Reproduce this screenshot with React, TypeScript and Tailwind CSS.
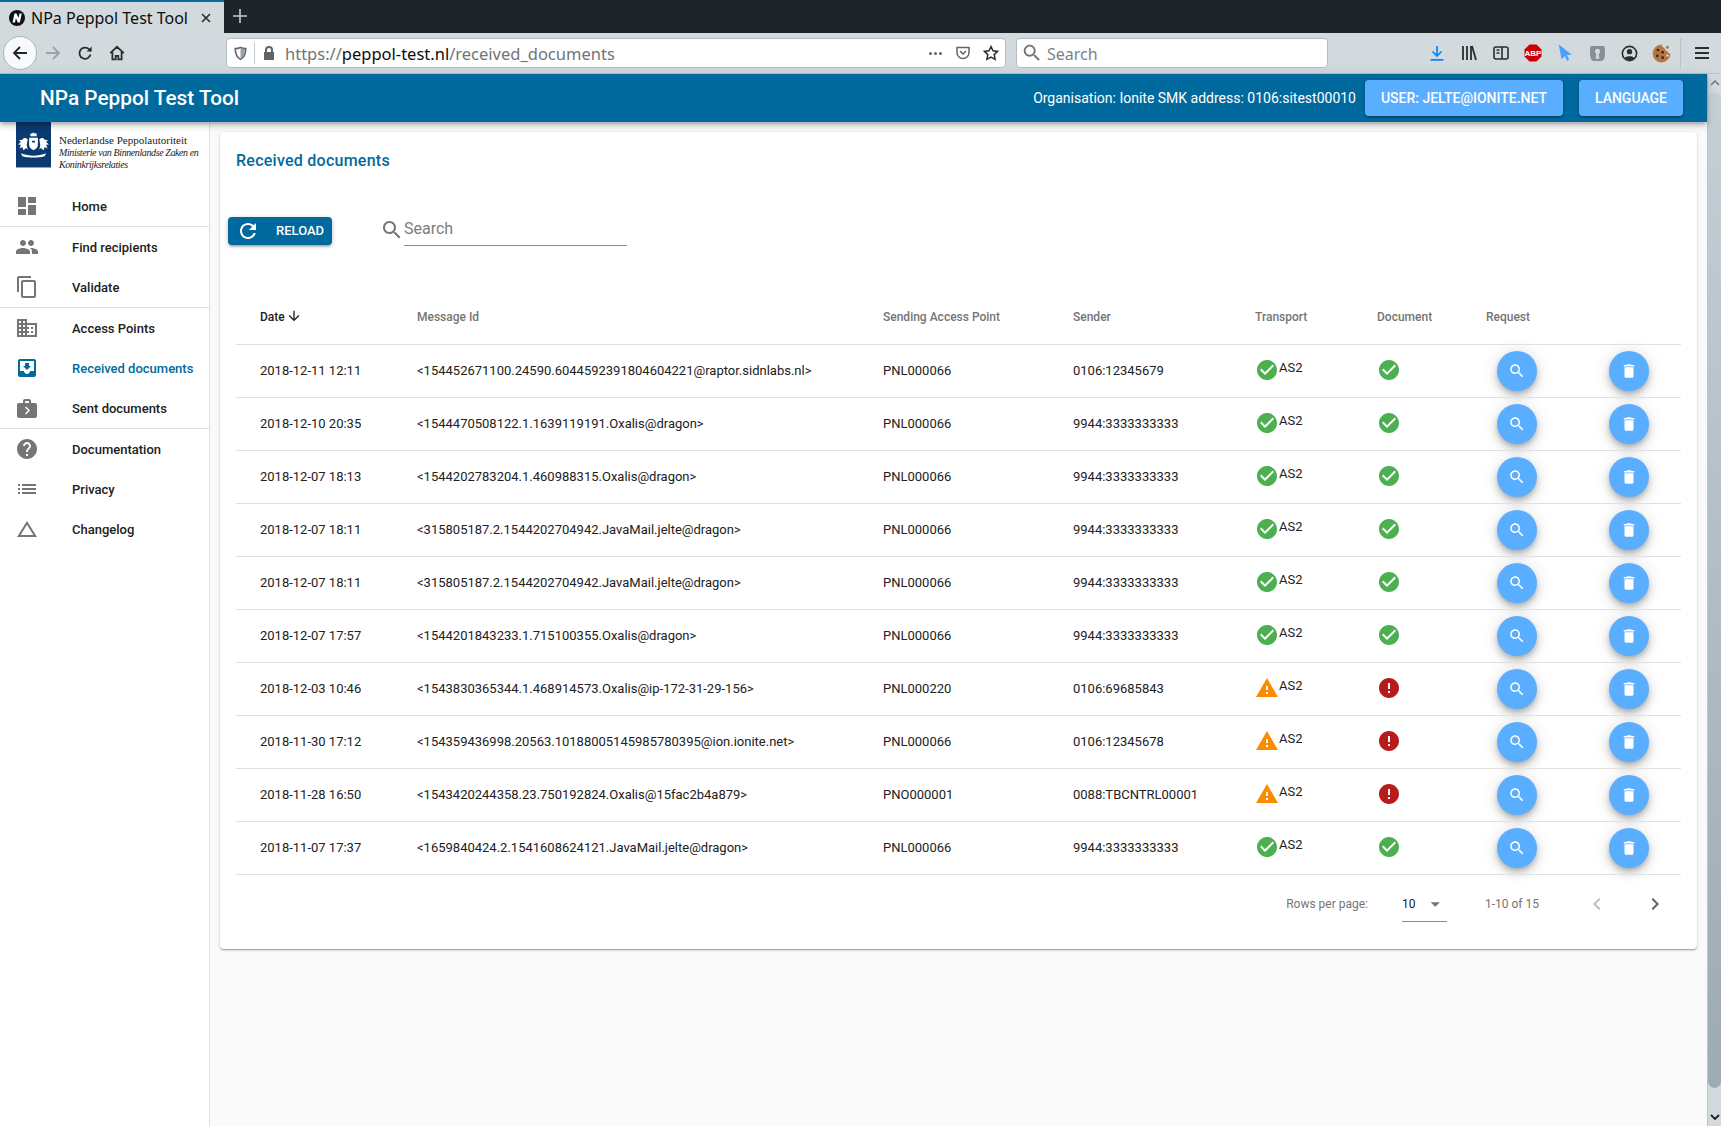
import React from "react";

const paths = {
  dashboard: "M3 13h8V3H3v10zm0 8h8v-6H3v6zm10 0h8V11h-8v10zm0-18v6h8V3h-8z",
  people:
    "M16 11c1.66 0 2.99-1.34 2.99-3S17.66 5 16 5c-1.66 0-3 1.34-3 3s1.34 3 3 3zm-8 0c1.66 0 2.99-1.34 2.99-3S9.66 5 8 5C6.34 5 5 6.34 5 8s1.34 3 3 3zm0 2c-2.33 0-7 1.17-7 3.5V19h14v-2.5c0-2.33-4.67-3.5-7-3.5zm8 0c-.29 0-.62.02-.97.05 1.16.84 1.97 1.97 1.97 3.45V19h6v-2.5c0-2.33-4.67-3.5-7-3.5z",
  copy: "M16 1H4c-1.1 0-2 .9-2 2v14h2V3h12V1zm3 4H8c-1.1 0-2 .9-2 2v14c0 1.1.9 2 2 2h11c1.1 0 2-.9 2-2V7c0-1.1-.9-2-2-2zm0 16H8V7h11v14z",
  business:
    "M12 7V3H2v18h20V7H12zM6 19H4v-2h2v2zm0-4H4v-2h2v2zm0-4H4V9h2v2zm0-4H4V5h2v2zm4 12H8v-2h2v2zm0-4H8v-2h2v2zm0-4H8V9h2v2zm0-4H8V5h2v2zm10 12h-8v-2h2v-2h-2v-2h2v-2h-2V9h8v10zm-2-8h-2v2h2v-2zm0 4h-2v2h2v-2z",
  inbox:
    "M19 3H4.99c-1.11 0-1.98.89-1.98 2L3 19c0 1.1.88 2 1.99 2H19c1.1 0 2-.9 2-2V5c0-1.11-.9-2-2-2zm0 12h-4c0 1.66-1.35 3-3 3s-3-1.34-3-3H4.99V5H19v10zm-3-5h-2V7h-4v3H8l4 4 4-4z",
  nextWeek:
    "M20 7h-4V5c0-.55-.22-1.05-.59-1.41C15.05 3.22 14.55 3 14 3h-4c-1.1 0-2 .9-2 2v2H4c-1.1 0-2 .9-2 2v11c0 1.1.9 2 2 2h16c1.1 0 2-.9 2-2V9c0-1.1-.9-2-2-2zM10 5h4v2h-4V5zm1 13.5l-1-1 3-3-3-3 1-1 4 4-4 4z",
  help: "M12 2C6.48 2 2 6.48 2 12s4.48 10 10 10 10-4.48 10-10S17.52 2 12 2zm1 17h-2v-2h2v2zm2.07-7.75l-.9.92C13.45 12.9 13 13.5 13 15h-2v-.5c0-1.1.45-2.1 1.17-2.83l1.24-1.26c.37-.36.59-.86.59-1.41 0-1.1-.9-2-2-2s-2 .9-2 2H8c0-2.21 1.79-4 4-4s4 1.79 4 4c0 .88-.36 1.68-.93 2.25z",
  list: "M3 13h2v-2H3v2zm0 4h2v-2H3v2zm0-8h2V7H3v2zm4 4h14v-2H7v2zm0 4h14v-2H7v2zM7 7v2h14V7H7z",
  change: "M12 7.77L18.39 18H5.61L12 7.77M12 4L2 20h20L12 4z",
  refresh:
    "M17.65 6.35C16.2 4.9 14.21 4 12 4c-4.42 0-7.99 3.58-7.99 8s3.57 8 7.99 8c3.73 0 6.84-2.55 7.73-6h-2.08c-.82 2.33-3.04 4-5.65 4-3.31 0-6-2.69-6-6s2.69-6 6-6c1.66 0 3.14.69 4.22 1.78L13 11h7V4l-2.35 2.35z",
  search:
    "M15.5 14h-.79l-.28-.27C15.41 12.59 16 11.11 16 9.5 16 5.91 13.09 3 9.5 3S3 5.91 3 9.5 5.91 16 9.5 16c1.61 0 3.09-.59 4.23-1.57l.27.28v.79l5 4.99L20.49 19l-4.99-5zm-6 0C7.01 14 5 11.99 5 9.5S7.01 5 9.5 5 14 7.01 14 9.5 11.99 14 9.5 14z",
  trash: "M6 19c0 1.1.9 2 2 2h8c1.1 0 2-.9 2-2V7H6v12zM19 4h-3.5l-1-1h-5l-1 1H5v2h14V4z",
  arrowDown: "M20 12l-1.41-1.41L13 16.17V4h-2v12.17l-5.58-5.59L4 12l8 8 8-8z",
  check:
    "M12 2C6.48 2 2 6.48 2 12s4.48 10 10 10 10-4.48 10-10S17.52 2 12 2zm-2 15l-5-5 1.41-1.41L10 14.17l7.59-7.59L19 8l-9 9z",
  warning: "M1 21h22L12 2 1 21zm12-3h-2v-2h2v2zm0-4h-2v-4h2v4z",
  error: "M12 2C6.48 2 2 6.48 2 12s4.48 10 10 10 10-4.48 10-10S17.52 2 12 2zm1 15h-2v-2h2v2zm0-4h-2V7h2v6z",
  chevronLeft: "M15.41 7.41L14 6l-6 6 6 6 1.41-1.41L10.83 12z",
  chevronRight: "M10 6L8.59 7.41 13.17 12l-4.58 4.59L10 18l6-6z",
  dropDown: "M7 10l5 5 5-5z",
};

const MuiIcon = ({ d, className }: { d: string; className?: string }) => (
  <svg viewBox="0 0 24 24" fill="currentColor" className={className}>
    <path d={d} />
  </svg>
);

const navGroups = [
  [{ label: "Home", icon: paths.dashboard }],
  [
    { label: "Find recipients", icon: paths.people },
    { label: "Validate", icon: paths.copy },
  ],
  [
    { label: "Access Points", icon: paths.business },
    { label: "Received documents", icon: paths.inbox, active: true },
    { label: "Sent documents", icon: paths.nextWeek },
  ],
  [
    { label: "Documentation", icon: paths.help },
    { label: "Privacy", icon: paths.list },
    { label: "Changelog", icon: paths.change },
  ],
];

const rows = [
  ["2018-12-11 12:11", "<154452671100.24590.6044592391804604221@raptor.sidnlabs.nl>", "PNL000066", "0106:12345679", true],
  ["2018-12-10 20:35", "<1544470508122.1.1639119191.Oxalis@dragon>", "PNL000066", "9944:3333333333", true],
  ["2018-12-07 18:13", "<1544202783204.1.460988315.Oxalis@dragon>", "PNL000066", "9944:3333333333", true],
  ["2018-12-07 18:11", "<315805187.2.1544202704942.JavaMail.jelte@dragon>", "PNL000066", "9944:3333333333", true],
  ["2018-12-07 18:11", "<315805187.2.1544202704942.JavaMail.jelte@dragon>", "PNL000066", "9944:3333333333", true],
  ["2018-12-07 17:57", "<1544201843233.1.715100355.Oxalis@dragon>", "PNL000066", "9944:3333333333", true],
  ["2018-12-03 10:46", "<1543830365344.1.468914573.Oxalis@ip-172-31-29-156>", "PNL000220", "0106:69685843", false],
  ["2018-11-30 17:12", "<154359436998.20563.10188005145985780395@ion.ionite.net>", "PNL000066", "0106:12345678", false],
  ["2018-11-28 16:50", "<1543420244358.23.750192824.Oxalis@15fac2b4a879>", "PNO000001", "0088:TBCNTRL00001", false],
  ["2018-11-07 17:37", "<1659840424.2.1541608624121.JavaMail.jelte@dragon>", "PNL000066", "9944:3333333333", true],
] as const;

const TabBar = () => (
  <div className="flex h-[33px] bg-[#1f2428] [font-family:'Noto_Sans',sans-serif]">
    <div className="flex h-[33px] w-[224px] items-center border-t-2 border-[#0a6a9e] bg-[#d2dade] pl-[9px] text-[16px] text-[#0c0c0d]">
      <svg viewBox="0 0 16 16" className="h-4 w-4 shrink-0">
        <circle cx="8" cy="8" r="8" fill="#111" />
        <path d="M3.500 12.500 L5.500 3.500 H7.500 L9.500 8 L10.500 3.500 H12.800 L10.800 12.500 H8.800 L6.900 8 L6 12.500 Z" fill="#fff" />
      </svg>
      <span className="ml-[6px] whitespace-nowrap">NPa Peppol Test Tool</span>
      <svg viewBox="0 0 12 12" className="ml-[12px] h-3 w-3 shrink-0" stroke="#2a2a2e" strokeWidth="1.6">
        <path d="M2 2l8 8M10 2l-8 8" />
      </svg>
    </div>
    <svg viewBox="0 0 16 16" className="ml-[8px] mt-[8px] h-4 w-4" stroke="#c5ccd0" strokeWidth="1.6">
      <path d="M8 1v14M1 8h14" />
    </svg>
  </div>
);

const Toolbar = () => (
  <div className="flex h-[41px] items-center border-b border-[#b9c4c9] bg-[#d2dade] pl-[3px] [font-family:'Noto_Sans',sans-serif]">
    <div className="flex h-[34px] w-[34px] items-center justify-center rounded-full border border-[#a9b4ba] bg-[#f7f9fa]">
      <svg viewBox="0 0 18 18" className="h-[18px] w-[18px]" fill="none" stroke="#1f2428" strokeWidth="1.8">
        <path d="M16 9H3M9 3L3 9l6 6" />
      </svg>
    </div>
    <div className="flex w-8 justify-center">
      <svg viewBox="0 0 18 18" className="h-[18px] w-[18px]" fill="none" stroke="#9aa3a8" strokeWidth="1.8">
        <path d="M2 9h13M9 3l6 6-6 6" />
      </svg>
    </div>
    <div className="flex w-8 justify-center">
      <svg viewBox="0 0 16 16" className="h-4 w-4" fill="none" stroke="#2a2e31" strokeWidth="1.8">
        <path d="M13.500 9.500A5.600 5.600 0 1 1 12 4.200L14 6" />
        <path d="M14.600 1.500v5h-5" fill="#2a2e31" stroke="none" />
      </svg>
    </div>
    <div className="flex w-8 justify-center">
      <svg viewBox="0 0 16 16" className="h-4 w-4" fill="none" stroke="#2a2e31" strokeWidth="1.8">
        <path d="M1.200 8.200L8 1.800l6.800 6.400M3.400 7v7.400h3.300v-3.600h2.600v3.600h3.300V7" />
      </svg>
    </div>
    <div className="ml-[93px] flex h-[30px] w-[780px] items-center rounded border border-[#b1bdc3] bg-white">
      <svg viewBox="0 0 16 16" className="ml-[6px] h-[15px] w-[15px]" fill="none" stroke="#5f6468" strokeWidth="1.7">
        <path d="M8 1.600c2 .9 3.700 1.200 5.600 1.200 0 5-1.600 9-5.600 11.400C4 11.800 2.400 7.800 2.400 2.800 4.300 2.800 6 2.500 8 1.600z" />
        <path d="M8 1.600v12.600c2.900-2 4.400-6 4.800-10.700-1.900 0-3.200-.8-4.800-1.900z" fill="#9aa0a4" stroke="none" />
      </svg>
      <div className="ml-[6px] h-[22px] w-px bg-[#c3ccd1]" />
      <svg viewBox="0 0 16 16" className="ml-[6px] h-4 w-4" fill="#5f6468">
        <path d="M4 7V5a4 4 0 0 1 8 0v2h1v8H3V7h1zm2 0h4V5a2 2 0 0 0-4 0v2z" />
      </svg>
      <span className="ml-[8px] pt-[2px] text-[16.5px] text-[#6f7478]">
        https://<span className="text-[#0c0c0d]">peppol-test.nl</span>/received_documents
      </span>
      <div className="ml-auto flex items-center">
        <div className="flex w-[28px] justify-center gap-[2px]">
          <span className="h-[3px] w-[3px] rounded-full bg-[#5f6468]" />
          <span className="h-[3px] w-[3px] rounded-full bg-[#5f6468]" />
          <span className="h-[3px] w-[3px] rounded-full bg-[#5f6468]" />
        </div>
        <svg viewBox="0 0 16 16" className="ml-[6px] h-4 w-4" fill="none" stroke="#5f6468" strokeWidth="1.5">
          <path d="M2 2.500h12v5a6 6 0 0 1-12 0v-5z" />
          <path d="M5 6l3 3 3-3" />
        </svg>
        <svg viewBox="0 0 16 16" className="ml-[12px] mr-[6px] h-4 w-4" fill="none" stroke="#2a2e31" strokeWidth="1.5">
          <path d="M8 1.500l2 4.300 4.600.6-3.400 3.200.9 4.700L8 12l-4.100 2.300.9-4.700L1.400 6.400 6 5.800z" />
        </svg>
      </div>
    </div>
    <div className="ml-[10px] flex h-[30px] w-[312px] items-center rounded border border-[#b1bdc3] bg-white pl-[4px]">
      <MuiIcon d={paths.search} className="h-[22px] w-[22px] text-[#6f7478]" />
      <span className="ml-[4px] pt-[1px] text-[16px] text-[#7b8185]">Search</span>
    </div>
    <div className="ml-[93px] flex items-center">
      <div className="flex w-8 justify-center">
        <svg viewBox="0 0 16 16" className="h-4 w-4" fill="none" stroke="#0a84ff" strokeWidth="1.7">
          <path d="M8 1v10M3.500 6.500L8 11l4.500-4.500M1.500 14.800h13" />
        </svg>
      </div>
      <div className="flex w-8 justify-center">
        <svg viewBox="0 0 16 16" className="h-4 w-4" fill="none" stroke="#2a2e31" strokeWidth="1.8">
          <path d="M2 1v14M6 1v14M10 1v14M11 1l4 14" />
        </svg>
      </div>
      <div className="flex w-8 justify-center">
        <svg viewBox="0 0 16 16" className="h-4 w-4" fill="none" stroke="#2a2e31" strokeWidth="1.6">
          <rect x="1" y="2" width="14" height="12" rx="2" />
          <path d="M9 2v12M3.500 5H6.500M3.500 8H6.500" />
        </svg>
      </div>
      <div className="flex w-8 justify-center">
        <svg viewBox="0 0 18 18" className="h-[18px] w-[18px]">
          <path d="M5.500 0.500h7l5 5v7l-5 5h-7l-5-5v-7z" fill="#c90000" />
          <text x="9" y="11.700" textAnchor="middle" fontSize="8" fontWeight="700" fill="#fff" fontFamily="Liberation Sans, sans-serif">ABP</text>
        </svg>
      </div>
      <div className="flex w-8 justify-center">
        <svg viewBox="0 0 16 16" className="h-[18px] w-[18px]" fill="#4a9eff">
          <path d="M2.500 0.500l11.500 9-4.300.3 2.100 4.300-1.900 1-2-4.400-3 2.900z" />
        </svg>
      </div>
      <div className="flex w-8 justify-center">
        <svg viewBox="0 0 16 16" className="h-[17px] w-[17px]" fill="#8a8f93">
          <path fillRule="evenodd" d="M3 1h10a2 2 0 0 1 2 2v6c0 2.500-1 6-3 6H4c-2 0-3-3.500-3-6V3a2 2 0 0 1 2-2zm5 2.500a2.500 2.500 0 0 0-1.200 4.700L6.200 13h3.600l-.6-4.800A2.500 2.500 0 0 0 8 3.500z" />
        </svg>
      </div>
      <div className="flex w-8 justify-center">
        <svg viewBox="0 0 16 16" className="h-[17px] w-[17px]">
          <circle cx="8" cy="8" r="6.700" fill="none" stroke="#2a2e31" strokeWidth="1.500" />
          <circle cx="8" cy="6.300" r="2.500" fill="#2a2e31" />
          <path d="M3.500 12.500c1-2.500 8-2.500 9 0-2 2.400-7 2.400-9 0z" fill="#2a2e31" />
        </svg>
      </div>
      <div className="flex w-8 justify-center">
        <svg viewBox="0 0 16 16" className="h-[19px] w-[19px]">
          <path d="M8 0.500a7.500 7.500 0 1 0 7.500 7.500c-1.500 0-2-.8-2.500-2-1.200 0-2-.8-2-2-1.500-.5-2.300-1.800-3-3.500z" fill="#b5763f" />
          <circle cx="5" cy="5" r="1.100" fill="#3f2413" />
          <circle cx="9" cy="7" r="1.100" fill="#3f2413" />
          <circle cx="4.500" cy="10" r="1.100" fill="#3f2413" />
          <circle cx="9" cy="11.500" r="1.100" fill="#3f2413" />
          <circle cx="13" cy="2.800" r="1.300" fill="#b5763f" />
          <path d="M12 9h2v1.500h-2z" fill="#e9dccb" />
        </svg>
      </div>
      <div className="ml-[3px] h-[30px] w-px bg-[#b9c4c9]" />
      <div className="ml-[14px] flex flex-col gap-[3px]">
        <span className="h-[2px] w-[14px] bg-[#2a2e31]" />
        <span className="h-[2px] w-[14px] bg-[#2a2e31]" />
        <span className="h-[2px] w-[14px] bg-[#2a2e31]" />
      </div>
    </div>
  </div>
);

const Sidebar = () => (
  <aside className="w-[210px] shrink-0 border-r border-[#e0e0e0] bg-white">
    <div className="flex h-[64px] items-start">
      <div className="ml-4 flex h-[46px] w-[35px] items-center justify-center border-b border-[#8ba3bd] bg-[#0b3a70]">
        <svg viewBox="0 0 32 26" className="h-[26px] w-[31px]" fill="#fff">
          <path d="M16 0l1.500 1.500 1.500-1 .3 3.500h-6.600l.3-3.500 1 1z" />
          <path fillRule="evenodd" d="M11.500 5.500h9v7.500c0 2.700-2.200 4.300-4.500 5.300-2.300-1-4.500-2.600-4.500-5.300zm3 3v2h3v-2z" />
          <path d="M10 7C7.500 5 5.500 5.500 4.500 7.500L1 8l2 2-3 2.500 3 .3-1.500 3.700 3-1.500 1 3.500 3-2.500 1.500 2-1-5z" />
          <path d="M22 7c2.500-2 4.500-1.500 5.500.5L31 8l-2 2 3 2.500-3 .3 1.500 3.700-3-1.500-1 3.500-3-2.500-1.500 2 1-5z" />
          <path d="M3 21.500c4 1.700 8.500 2.500 13 2.500s9-.8 13-2.500l-1.500 3c-3.500 1-7.500 1.500-11.500 1.500s-8-.5-11.500-1.500z" />
        </svg>
      </div>
      <div className="ml-2 mt-[12px] w-[148px] leading-[12px] text-[#222] [font-family:'Liberation_Serif',serif]">
        <div className="text-[11px] leading-[13px]">Nederlandse Peppolautoriteit</div>
        <div className="text-[10px] italic tracking-[-0.4px]">Ministerie van Binnenlandse Zaken en</div>
        <div className="text-[10px] italic tracking-[-0.4px]">Koninkrijksrelaties</div>
      </div>
    </div>
    <nav>
      {navGroups.map((group, i) => (
        <div key={i} className="border-b border-[#e0e0e0] last:border-b-0">
          {group.map((item) => (
            <div key={item.label} className="flex h-10 items-center pl-[15px]">
              <MuiIcon
                d={item.icon}
                className={`h-6 w-6 ${item.active ? "text-[#006a9e]" : "text-[#757575]"}`}
              />
              <span
                className={`ml-[33px] pt-[2px] text-[13px] font-medium ${item.active ? "text-[#006a9e]" : "text-[#212121]"}`}
              >
                {item.label}
              </span>
            </div>
          ))}
        </div>
      ))}
    </nav>
  </aside>
);

const headCell = "pl-6 pt-[2px] text-left text-xs font-medium text-[#757575]";

const DocumentTable = () => (
  <table className="ml-4 w-[1445px] table-fixed">
    <thead>
      <tr className="h-14 border-b border-[#e0e0e0]">
        <th className="w-[157px] pl-6 pt-[2px] text-left text-xs font-medium text-[#212121]">
          <span className="inline-flex items-center">
            Date
            <MuiIcon d={paths.arrowDown} className="ml-[1px] mb-[2px] h-4 w-4" />
          </span>
        </th>
        <th className={`w-[466px] ${headCell}`}>Message Id</th>
        <th className={`w-[190px] ${headCell}`}>Sending Access Point</th>
        <th className={`w-[182px] ${headCell}`}>Sender</th>
        <th className={`w-[122px] ${headCell}`}>Transport</th>
        <th className={`w-[109px] ${headCell}`}>Document</th>
        <th className={`w-[123px] ${headCell}`}>Request</th>
        <th className="w-[96px]" />
      </tr>
    </thead>
    <tbody>
      {rows.map((row, i) => (
        <tr key={i} className="h-[53px] border-b border-[#e0e0e0] text-[13px] text-[#212121]">
          <td className="pl-6">{row[0]}</td>
          <td className="pl-6 whitespace-nowrap">{row[1]}</td>
          <td className="pl-6">{row[2]}</td>
          <td className="pl-6">{row[3]}</td>
          <td className="pl-6">
            <div className="-mt-[2px] flex items-start">
              {row[4] ? (
                <MuiIcon d={paths.check} className="h-6 w-6 shrink-0 text-[#4caf50]" />
              ) : (
                <MuiIcon d={paths.warning} className="h-6 w-6 shrink-0 text-[#fb8c00]" />
              )}
              <span className="mt-[1px] leading-[18px]">AS2</span>
            </div>
          </td>
          <td className="pl-6">
            {row[4] ? (
              <MuiIcon d={paths.check} className="-mt-[2px] h-6 w-6 text-[#4caf50]" />
            ) : (
              <MuiIcon d={paths.error} className="-mt-[2px] h-6 w-6 text-[#b71c1c]" />
            )}
          </td>
          <td className="pl-6">
            <button className="ml-[11px] flex h-10 w-10 items-center justify-center rounded-full bg-[#5aaeff] text-white shadow-[0_3px_5px_-1px_rgba(0,0,0,0.2),0_6px_10px_0_rgba(0,0,0,0.14),0_1px_18px_0_rgba(0,0,0,0.12)]">
              <MuiIcon d={paths.search} className="h-[18px] w-[18px]" />
            </button>
          </td>
          <td className="pl-6">
            <button className="flex h-10 w-10 items-center justify-center rounded-full bg-[#5aaeff] text-white shadow-[0_3px_5px_-1px_rgba(0,0,0,0.2),0_6px_10px_0_rgba(0,0,0,0.14),0_1px_18px_0_rgba(0,0,0,0.12)]">
              <MuiIcon d={paths.trash} className="h-[18px] w-[18px]" />
            </button>
          </td>
        </tr>
      ))}
    </tbody>
  </table>
);

const Pagination = () => (
  <div className="flex h-[74px] items-start justify-end pr-[30px] pt-[17px] text-xs text-[#757575]">
    <span className="leading-6">Rows per page:</span>
    <div className="ml-[34px] flex h-[30px] w-[45px] items-start border-b border-[#8a8a8a] text-[#212121]">
      <span className="leading-6">10</span>
      <MuiIcon d={paths.dropDown} className="ml-[9px] h-6 w-6 text-[#757575]" />
    </div>
    <span className="ml-[38px] leading-6">1-10 of 15</span>
    <MuiIcon d={paths.chevronLeft} className="ml-[46px] h-6 w-6 text-[#bdbdbd]" />
    <MuiIcon d={paths.chevronRight} className="ml-[34px] h-6 w-6 text-[#616161]" />
  </div>
);

const Scrollbar = () => (
  <div className="flex w-[14px] shrink-0 flex-col items-center border-l border-[#b9c4c9] bg-[#d2dade]">
    <svg viewBox="0 0 10 6" className="mt-[6px] h-[6px] w-[10px]" fill="none" stroke="#6f7b81" strokeWidth="1.5">
      <path d="M1 5l4-4 4 4" />
    </svg>
    <div className="mt-[6px] h-[996px] w-full rounded-t-full rounded-b-full bg-gradient-to-b from-[#c5d0d5] to-[#9dabb2]" />
    <svg viewBox="0 0 10 6" className="mt-[26px] h-[6px] w-[10px]" fill="none" stroke="#222" strokeWidth="1.8">
      <path d="M1 1l4 4 4-4" />
    </svg>
  </div>
);

const App = () => {
  return (
    <div className="flex h-[1126px] flex-col overflow-hidden bg-[#fafafa] [font-family:Roboto,sans-serif]">
      <TabBar />
      <Toolbar />
      <div className="flex min-h-0 flex-1">
        <div className="flex min-w-0 flex-1 flex-col">
          <header className="z-10 flex h-12 shrink-0 items-center bg-[#006a9e] pl-10 pr-[24px] text-white shadow-[0_2px_4px_-1px_rgba(0,0,0,0.2),0_4px_5px_0_rgba(0,0,0,0.14),0_1px_10px_0_rgba(0,0,0,0.12)]">
            <h1 className="pt-[2px] text-[20.8px] font-medium">NPa Peppol Test Tool</h1>
            <span className="ml-auto text-sm">Organisation: Ionite SMK address: 0106:sitest00010</span>
            <button className="ml-[9px] flex h-[36px] w-[198px] items-center justify-center rounded bg-[#5aaeff] text-sm font-medium uppercase shadow-[0_1px_5px_0_rgba(0,0,0,0.2),0_2px_2px_0_rgba(0,0,0,0.14),0_3px_1px_-2px_rgba(0,0,0,0.12)]">
              User: jelte@ionite.net
            </button>
            <button className="ml-4 flex h-[36px] w-[104px] items-center justify-center rounded bg-[#5aaeff] text-sm font-medium uppercase shadow-[0_1px_5px_0_rgba(0,0,0,0.2),0_2px_2px_0_rgba(0,0,0,0.14),0_3px_1px_-2px_rgba(0,0,0,0.12)]">
              Language
            </button>
          </header>
          <div className="flex min-h-0 flex-1">
            <Sidebar />
            <main className="min-w-0 flex-1 pl-[10px] pr-[10px] pt-[10px]">
              <div className="rounded-sm bg-white shadow-[0_1px_3px_0_rgba(0,0,0,0.2),0_1px_1px_0_rgba(0,0,0,0.14),0_2px_1px_-1px_rgba(0,0,0,0.12)]">
                <h2 className="flex h-14 items-center pl-4 pt-[2px] text-base font-medium tracking-[0.25px] text-[#006a9e]">
                  Received documents
                </h2>
                <div className="mt-[29px] flex items-start pl-2">
                  <button className="flex h-[28px] w-[104px] items-center rounded-sm bg-[#006a9e] pl-2 text-[13px] font-medium text-white shadow-[0_1px_5px_0_rgba(0,0,0,0.2),0_2px_2px_0_rgba(0,0,0,0.14),0_3px_1px_-2px_rgba(0,0,0,0.12)]">
                    <MuiIcon d={paths.refresh} className="h-6 w-6" />
                    <span className="ml-4">RELOAD</span>
                  </button>
                  <MuiIcon d={paths.search} className="ml-[48px] mt-[1px] h-6 w-6 text-[#757575]" />
                  <div className="h-[29px] w-[223px] border-b border-[#8a8a8a] pt-[1px] text-base leading-[22px] text-[#7d7d7d]">
                    Search
                  </div>
                </div>
                <div className="mt-[42px]">
                  <DocumentTable />
                </div>
                <Pagination />
              </div>
            </main>
          </div>
        </div>
        <Scrollbar />
      </div>
    </div>
  );
};

export default App;
